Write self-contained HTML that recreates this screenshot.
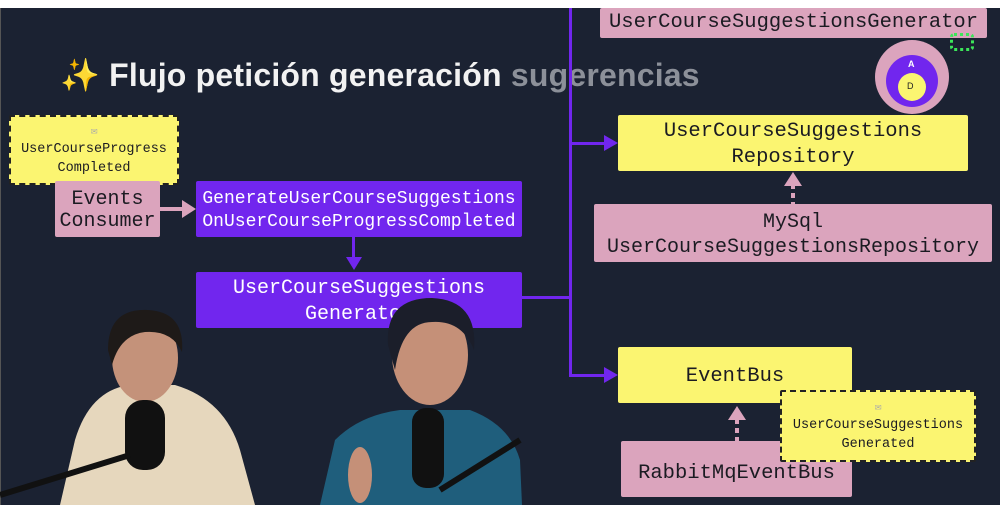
<!DOCTYPE html>
<html><head><meta charset="utf-8"><style>
*{margin:0;padding:0;box-sizing:border-box}
body{width:1000px;height:505px;background:#1b2232;position:relative;overflow:hidden;font-family:"Liberation Mono",monospace}
.b{position:absolute;display:flex;align-items:center;justify-content:center;text-align:center;line-height:1.25;border-radius:2px;padding-top:4px}
.p{background:#dba4bd;color:#1b1b22}
.y{background:#fbf571;color:#1b1b22}
.v{background:#7126ee;color:#fff}
.d{border:2px dashed #222}
.l{position:absolute;background:#7126ee}
.tri{position:absolute;width:0;height:0}
</style></head><body>
<div style="position:absolute;left:0;top:0;width:1000px;height:8px;background:#fff"></div>
<div style="position:absolute;left:0;top:8px;width:1px;height:497px;background:#555"></div>
<div style="position:absolute;left:60px;top:56px;font:bold 32px 'Liberation Sans',sans-serif;color:#f2f2f2;white-space:nowrap;letter-spacing:0.2px">✨ Flujo petición generación <span style="color:#8c9099">sugerencias</span></div>
<div class="l" style="left:569px;top:8px;width:3px;height:369px"></div>
<div class="l" style="left:569px;top:142px;width:38px;height:3px"></div>
<div class="tri" style="left:604px;top:135px;border-left:14px solid #7126ee;border-top:8px solid transparent;border-bottom:8px solid transparent"></div>
<div class="l" style="left:569px;top:374px;width:38px;height:3px"></div>
<div class="tri" style="left:604px;top:367px;border-left:14px solid #7126ee;border-top:8px solid transparent;border-bottom:8px solid transparent"></div>
<div class="l" style="left:522px;top:296px;width:49px;height:3px"></div>
<div class="l" style="left:352px;top:237px;width:3px;height:22px"></div>
<div class="tri" style="left:346px;top:257px;border-top:13px solid #7126ee;border-left:8px solid transparent;border-right:8px solid transparent"></div>
<div style="position:absolute;left:160px;top:207px;width:24px;height:4px;background:#dba4bd"></div>
<div class="tri" style="left:182px;top:200px;border-left:14px solid #dba4bd;border-top:9px solid transparent;border-bottom:9px solid transparent"></div>
<div style="position:absolute;left:791px;top:184px;width:4px;height:20px;background:repeating-linear-gradient(#dba4bd 0 5px,transparent 5px 9px)"></div>
<div class="tri" style="left:784px;top:172px;border-bottom:14px solid #dba4bd;border-left:9px solid transparent;border-right:9px solid transparent"></div>
<div style="position:absolute;left:735px;top:419px;width:4px;height:22px;background:repeating-linear-gradient(#dba4bd 0 5px,transparent 5px 9px)"></div>
<div class="tri" style="left:728px;top:406px;border-bottom:14px solid #dba4bd;border-left:9px solid transparent;border-right:9px solid transparent"></div>
<div class="b y d" style="left:9px;top:115px;width:170px;height:70px;font-size:13.5px;flex-direction:column;line-height:1.4"><span style="font-size:11px;color:#aaa">✉</span>UserCourseProgress<br>Completed</div>
<div class="b p" style="left:55px;top:181px;width:105px;height:56px;font-size:20px;line-height:1.1">Events<br>Consumer</div>
<div class="b v" style="left:196px;top:181px;width:326px;height:56px;font-size:18px;line-height:1.3">GenerateUserCourseSuggestions<br>OnUserCourseProgressCompleted</div>
<div class="b v" style="left:196px;top:272px;width:326px;height:56px;font-size:20px;line-height:1.3">UserCourseSuggestions<br>Generator</div>
<div class="b p" style="left:600px;top:8px;width:387px;height:30px;font-size:20.5px;padding-top:0">UserCourseSuggestionsGenerator</div>
<div style="position:absolute;left:875px;top:40px;width:74px;height:74px;border-radius:50%;background:#dba4bd"></div>
<div style="position:absolute;left:886px;top:55px;width:52px;height:52px;border-radius:50%;background:#7126ee"></div>
<div style="position:absolute;left:898px;top:73px;width:28px;height:28px;border-radius:50%;background:#fbf571"></div>
<div style="position:absolute;left:907px;top:81px;font:9px 'Liberation Sans',sans-serif;color:#222">D</div>
<div style="position:absolute;left:908px;top:59px;font:bold 9px 'Liberation Sans',sans-serif;color:#fff">A</div>
<div style="position:absolute;left:950px;top:33px;width:24px;height:18px;border:3px dotted #3ce65a;border-radius:4px"></div>
<div class="b y" style="left:618px;top:115px;width:350px;height:56px;font-size:20.5px">UserCourseSuggestions<br>Repository</div>
<div class="b p" style="left:594px;top:204px;width:398px;height:58px;font-size:20px">MySql<br>UserCourseSuggestionsRepository</div>
<div class="b y" style="left:618px;top:347px;width:234px;height:56px;font-size:20.5px">EventBus</div>
<div class="b p" style="left:621px;top:441px;width:231px;height:56px;font-size:20.5px;padding-top:10px">RabbitMqEventBus</div>
<div class="b y d" style="left:780px;top:390px;width:196px;height:72px;font-size:13.5px;flex-direction:column;line-height:1.4"><span style="font-size:11px;color:#aaa">✉</span>UserCourseSuggestions<br>Generated</div>
<svg style="position:absolute;left:0;top:290px" width="560" height="215">
<path d="M60 215 L75 150 Q90 100 130 95 L175 95 Q225 110 240 160 L255 215Z" fill="#e6d7bd"/>
<ellipse cx="145" cy="68" rx="33" ry="44" fill="#c4927a"/>
<path d="M108 60 Q108 18 148 20 Q185 22 182 62 Q172 40 145 42 Q120 45 112 75Z" fill="#1e1a18"/>
<rect x="125" y="110" width="40" height="70" rx="18" fill="#111"/>
<path d="M0 205 L130 165" stroke="#111" stroke-width="6"/>
<path d="M320 215 L335 150 Q360 125 400 120 L470 120 Q510 135 520 170 L522 215Z" fill="#1f5e7c"/>
<ellipse cx="430" cy="65" rx="38" ry="50" fill="#c59078"/>
<path d="M388 55 Q385 8 432 8 Q478 10 474 60 Q462 30 432 32 Q402 32 395 80Z" fill="#1b1e2a"/>
<rect x="412" y="118" width="32" height="80" rx="14" fill="#111"/>
<path d="M440 200 L520 150" stroke="#111" stroke-width="6"/>
<ellipse cx="360" cy="185" rx="12" ry="28" fill="#c59078"/>
</svg>
</body></html>
